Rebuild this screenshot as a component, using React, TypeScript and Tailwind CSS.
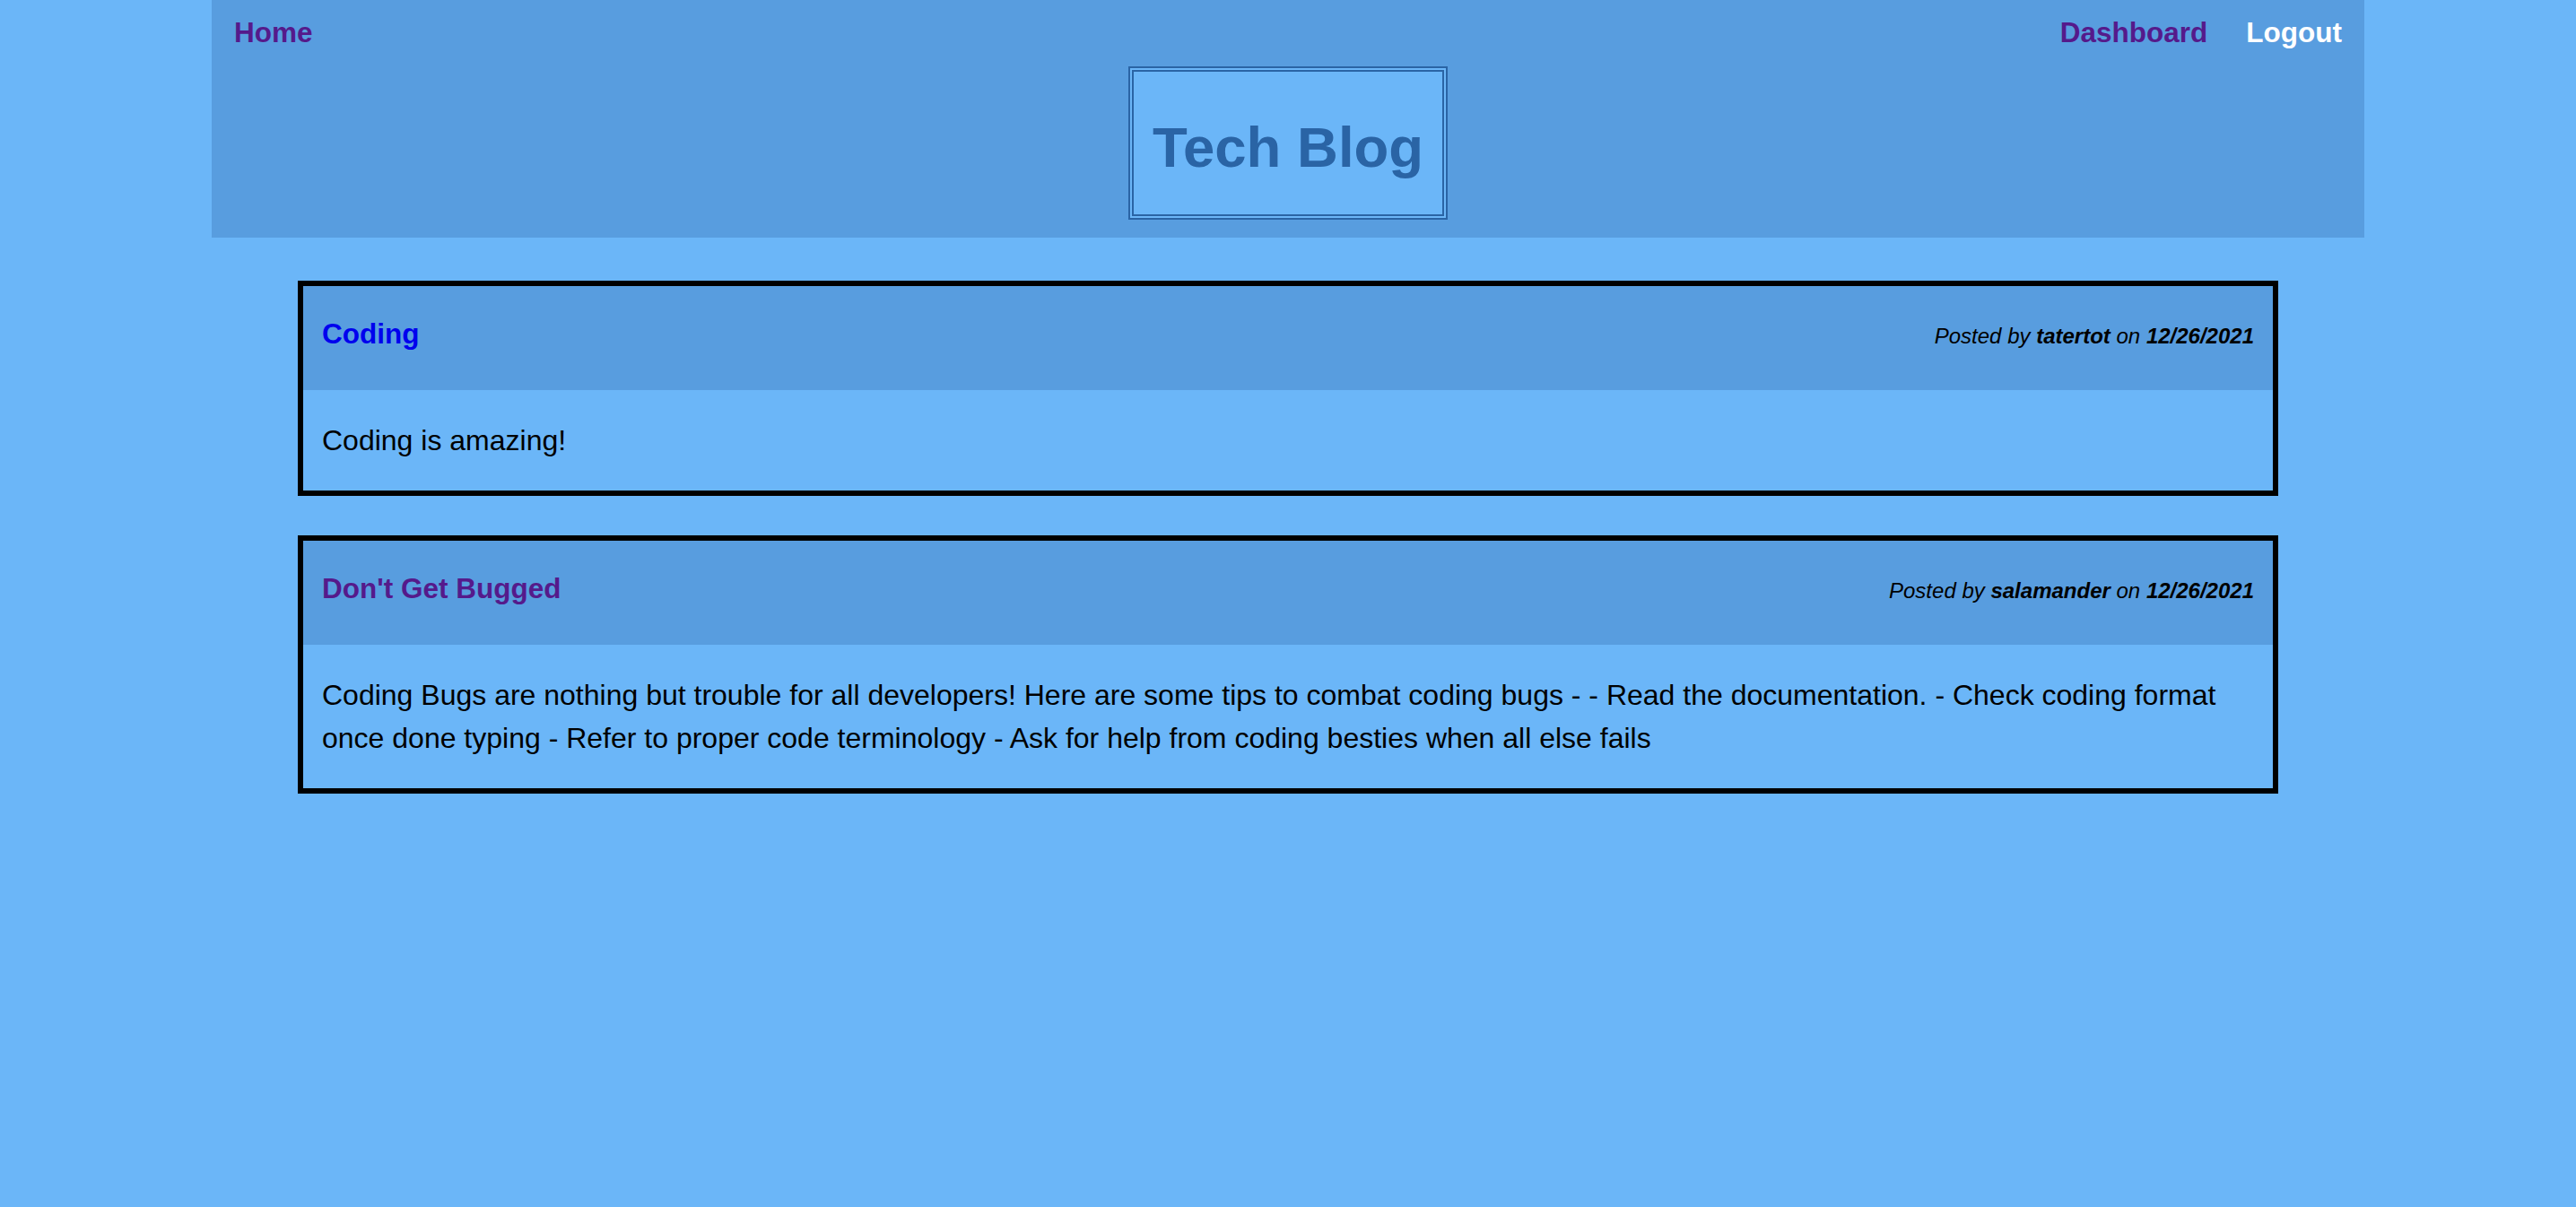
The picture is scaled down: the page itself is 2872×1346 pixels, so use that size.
const posts = [
  {
    title: "Coding",
    visited: false,
    author: "tatertot",
    date: "12/26/2021",
    body: "Coding is amazing!",
  },
  {
    title: "Don't Get Bugged",
    visited: true,
    author: "salamander",
    date: "12/26/2021",
    body: "Coding Bugs are nothing but trouble for all developers! Here are some tips to combat coding bugs - - Read the documentation. - Check coding format once done typing - Refer to proper code terminology - Ask for help from coding besties when all else fails",
  },
];

const App = () => {
  return (
    <div className="min-h-screen bg-[#6bb6f8] font-['Liberation_Sans',Arial,sans-serif] text-black">
      {/* Header */}
      <header className="mx-auto max-w-[2400px] bg-[#589ddf] px-[25px] pt-[18px] pb-[20px]">
        <nav className="flex items-center justify-between text-[31.5px] font-bold leading-[36px]">
          <a href="#" className="text-[#551a8b]">
            Home
          </a>
          <div className="flex gap-[43px]">
            <a href="#" className="text-[#551a8b]">
              Dashboard
            </a>
            <a href="#" className="text-white">
              Logout
            </a>
          </div>
        </nav>
        <div className="mt-[20px] flex justify-center">
          <h1 className="border-[6px] border-double border-[#2a64a5] bg-[#6bb6f8] px-[21px] pt-[48px] pb-[39px] text-[63.5px] font-bold leading-[72px] text-[#2a64a5]">
            Tech Blog
          </h1>
        </div>
      </header>

      {/* Posts */}
      <main className="mx-auto flex w-[2208px] flex-col gap-[44px] pt-[48px]">
        {posts.map((post) => (
          <article key={post.title} className="border-[6px] border-black">
            <div className="flex h-[116px] items-baseline justify-between bg-[#589ddf] px-[21px] pt-[35px]">
              <a
                href="#"
                className={
                  post.visited
                    ? "text-[31.5px] font-bold leading-[36px] text-[#551a8b]"
                    : "text-[31.5px] font-bold leading-[36px] text-[#0000ee]"
                }
              >
                {post.title}
              </a>
              <p className="text-[24px] italic leading-[28px]">
                Posted by <span className="font-bold">{post.author}</span> on{" "}
                <span className="font-bold">{post.date}</span>
              </p>
            </div>
            <div className="px-[21px] py-[32px] text-[32px] leading-[48px]">
              {post.body}
            </div>
          </article>
        ))}
      </main>
    </div>
  );
};

export default App;
